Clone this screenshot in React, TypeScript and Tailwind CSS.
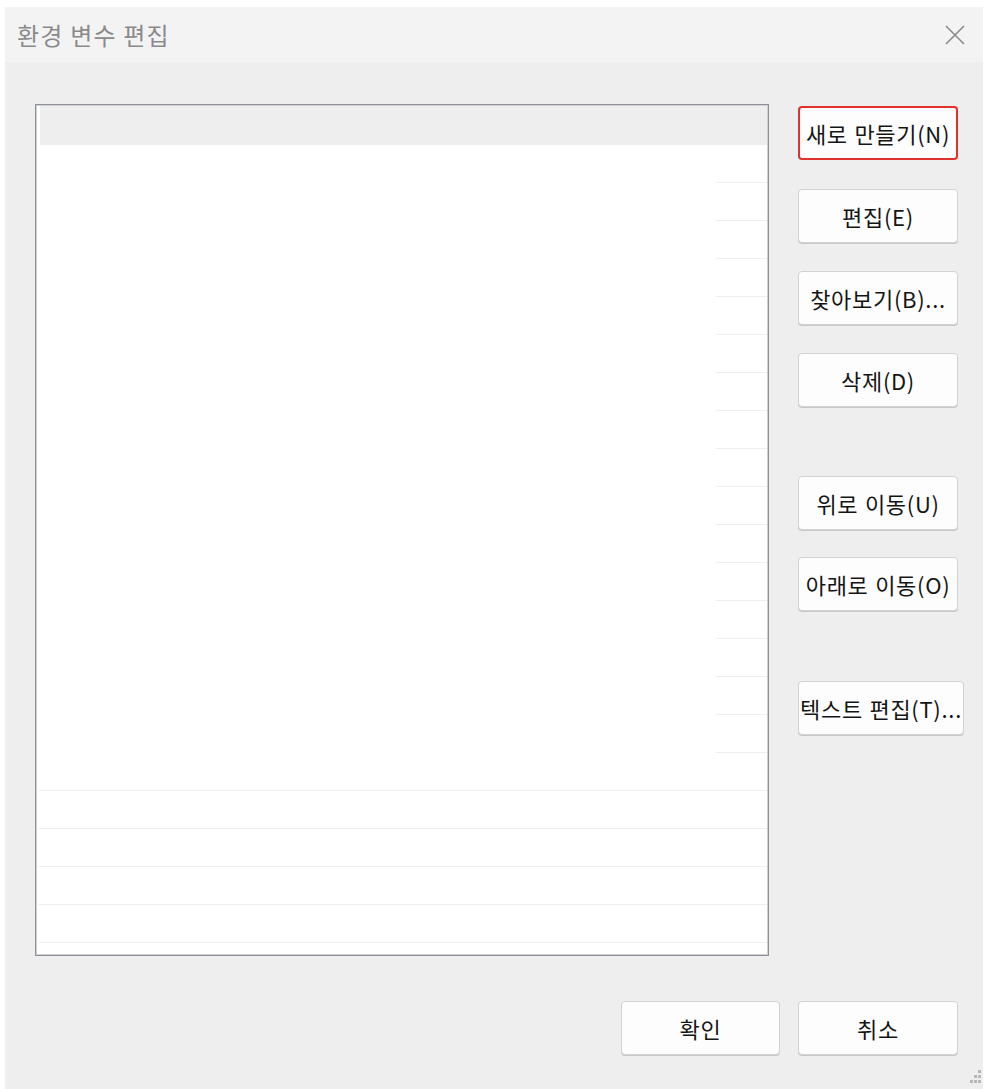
import React from "react";

const font = { fontFamily: '"Noto Sans CJK KR", "Noto Sans", sans-serif' };

function Btn({ label, className = "", red = false }: { label: string; className?: string; red?: boolean }) {
  return (
    <div
      className={
        "h-[54px] flex items-center justify-center whitespace-nowrap text-[22px] text-[#141414] bg-[#fdfdfd] rounded-[4px] " +
        (red ? "border-2 border-[#e2302b] rounded-[2px] " : "border border-[#d3d3d3] shadow-[0_1px_0_#c8c8c8] ") +
        className
      }
    >
      <span className="tracking-[0.7px] [word-spacing:1px]">{label}</span>
    </div>
  );
}

export default function App() {
  const rows = Array.from({ length: 21 }, (_, i) => i);
  return (
    <div className="w-[988px] h-[1089px] bg-white pt-[7px] pl-[5px] pr-[5px] flex flex-col overflow-hidden" style={font}>
      <div className="flex-1 flex flex-col">
        {/* title bar */}
        <div className="h-[55px] bg-[#f3f3f3] flex items-center justify-between pl-[12px] pr-[16px]">
          <span className="text-[24px] text-[#8a8a8a] tracking-[1.2px]">환경 변수 편집</span>
          <svg width="22" height="22" viewBox="0 0 22 22" className="mr-[1px]">
            <path d="M2 2 L20 20 M20 2 L2 20" stroke="#8a8a8a" strokeWidth="1.6" fill="none" />
          </svg>
        </div>
        {/* body */}
        <div className="flex-1 bg-[#eeeeee] pl-[30px] pt-[42px] flex flex-col relative">
          <div className="flex">
            {/* list box */}
            <div className="w-[734px] h-[852px] border border-[#8e9197] bg-white">
              <div className="h-full border border-[#cfd0d4] flex flex-col">
                <div className="h-[39px] bg-[#eeeeee] ml-[3px] shrink-0" />
                {rows.map((i) => (
                  <div key={i} className="h-[38px] shrink-0 flex flex-col justify-end">
                    <div className={"h-[1px] bg-[#efefef] " + (i < 16 ? "ml-[679px]" : "ml-[1px]")} />
                  </div>
                ))}
              </div>
            </div>
            {/* button column */}
            <div className="ml-[29px] flex flex-col">
              <Btn label="새로 만들기(N)" red className="w-[160px] mt-[2px]" />
              <Btn label="편집(E)" className="w-[160px] mt-[29px]" />
              <Btn label="찾아보기(B)..." className="w-[160px] mt-[28px]" />
              <Btn label="삭제(D)" className="w-[160px] mt-[28px]" />
              <Btn label="위로 이동(U)" className="w-[160px] mt-[69px]" />
              <Btn label="아래로 이동(O)" className="w-[160px] mt-[27px]" />
              <Btn label="텍스트 편집(T)..." className="w-[166px] mt-[70px]" />
            </div>
          </div>
          <div className="flex justify-end gap-[18px] mt-[45px] pr-[25px]">
            <Btn label="확인" className="w-[159px]" />
            <Btn label="취소" className="w-[160px]" />
          </div>
          {/* resize grip */}
          <svg width="16" height="16" viewBox="0 0 16 16" className="absolute right-[0px] bottom-[4px]">
            <rect x="11" y="1" width="3" height="3" fill="#b8b8b8" />
            <rect x="7" y="6" width="3" height="3" fill="#b8b8b8" />
            <rect x="11" y="6" width="3" height="3" fill="#b8b8b8" />
            <rect x="3" y="11" width="3" height="3" fill="#b8b8b8" />
            <rect x="7" y="11" width="3" height="3" fill="#b8b8b8" />
            <rect x="11" y="11" width="3" height="3" fill="#b8b8b8" />
          </svg>
        </div>
      </div>
    </div>
  );
}
